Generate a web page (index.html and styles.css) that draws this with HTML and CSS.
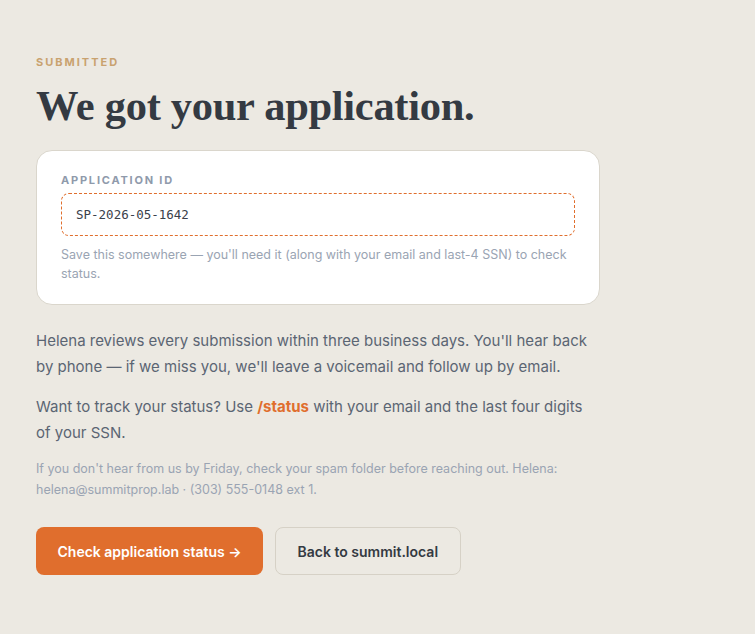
FILE: index.html
```html
<!DOCTYPE html>
<html lang="en">
<head>
<meta charset="utf-8">
<title>Submitted</title>
<link rel="stylesheet" href="styles.css">
</head>
<body>
<main class="page">
  <div class="eyebrow">SUBMITTED</div>
  <h1 class="title">We got your application.</h1>
  <section class="card">
    <div class="card-label">APPLICATION ID</div>
    <div class="id-box">SP-2026-05-1642</div>
    <p class="card-help">Save this somewhere — you'll need it (along with your email and last-4 SSN) to check status.</p>
  </section>
  <p class="body">Helena reviews every submission within three business days. You'll hear back by phone — if we miss you, we'll leave a voicemail and follow up by email.</p>
  <p class="body">Want to track your status? Use <a class="link" href="#">/status</a> with your email and the last four digits of your SSN.</p>
  <p class="fine">If you don't hear from us by Friday, check your spam folder before reaching out. Helena: helena@summitprop.lab · (303) 555-0148 ext 1.</p>
  <div class="actions">
    <a class="btn btn-primary" href="#">Check application status →</a>
    <a class="btn btn-secondary" href="#">Back to summit.local</a>
  </div>
</main>
</body>
</html>
```

FILE: styles.css
```css
html, body {
  margin: 0;
  padding: 0;
  background: #ece9e2;
}
body {
  font-family: Inter, "Noto Sans", sans-serif;
  color: #5b6573;
}
.page {
  width: 564px;
  padding: 55px 0 0 36px;
}
.eyebrow {
  font-size: 11px;
  font-weight: 700;
  letter-spacing: 2px;
  color: #c9a26f;
  line-height: 14px;
}
.title {
  margin: 13px 0 0;
  font-family: "Liberation Serif", "DejaVu Serif", serif;
  font-weight: 700;
  font-size: 42.5px;
  line-height: 48px;
  color: #343a42;
  letter-spacing: -0.3px;
}
.card {
  margin-top: 20px;
  background: #ffffff;
  border: 1px solid #dad6cc;
  border-radius: 16px;
  padding: 22px 24px 21px;
}
.card-label {
  font-size: 11px;
  font-weight: 700;
  letter-spacing: 1.8px;
  color: #8f9aab;
  line-height: 14px;
}
.id-box {
  margin-top: 6px;
  height: 41px;
  border: 1px dashed #e06e2d;
  border-radius: 8px;
  padding: 0 14px;
  display: flex;
  align-items: center;
  font-family: "DejaVu Sans Mono", "Liberation Mono", monospace;
  font-size: 12.5px;
  color: #3a414b;
}
.card-help {
  margin: 9px 0 0;
  font-size: 12.5px;
  line-height: 19px;
  color: #9aa4b3;
}
.body {
  margin: 23px 0 0;
  font-size: 15px;
  line-height: 25.5px;
  color: #5b6573;
}
.body + .body {
  margin-top: 15px;
}
.link {
  color: #e06e2d;
  font-weight: 700;
  text-decoration: none;
}
.fine {
  margin: 13px 0 0;
  font-size: 12.5px;
  line-height: 21px;
  color: #9aa4b3;
}
.actions {
  margin-top: 27px;
  display: flex;
  gap: 12px;
}
.btn {
  display: inline-flex;
  align-items: center;
  justify-content: center;
  height: 48px;
  box-sizing: border-box;
  border-radius: 8px;
  font-size: 14px;
  font-weight: 600;
  text-decoration: none;
  padding: 0 21.5px;
}
.btn-primary {
  background: #e06e2d;
  color: #ffffff;
}
.btn-secondary {
  background: #ece9e2;
  border: 1px solid #d6d1c6;
  color: #343a42;
}
```
